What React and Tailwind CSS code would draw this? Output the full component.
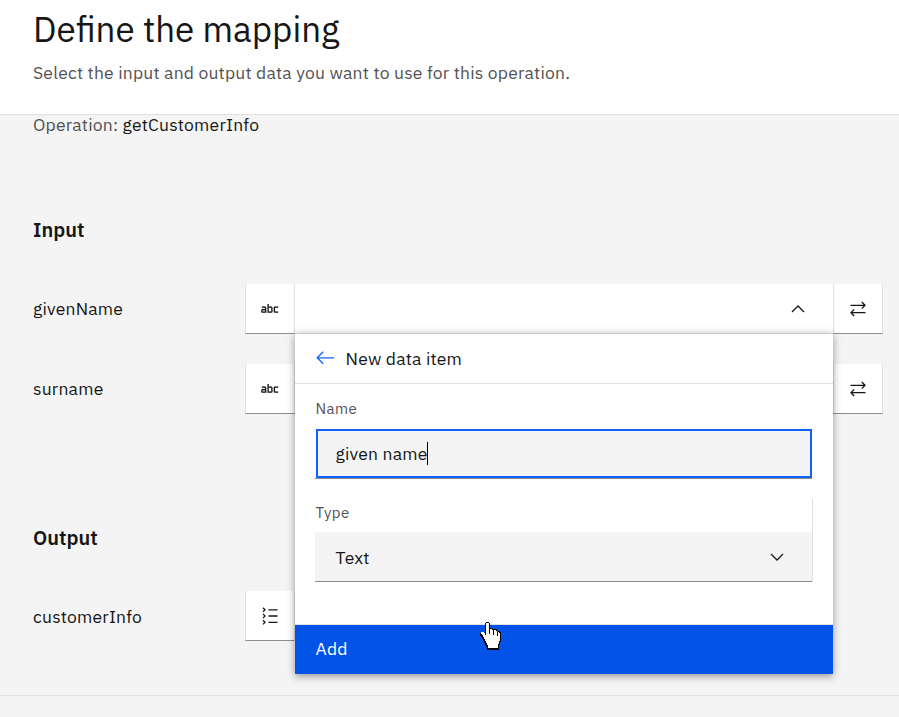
function TextTypeIcon() {
  return (
    <svg width="20" height="20" viewBox="0 0 32 32" fill="#161616" stroke="#161616" strokeWidth="0.2" aria-hidden="true">
      <path d="M29,22h-5a2,2,0,0,1-2-2V14a2,2,0,0,1,2-2h5v2H24v6h5Z" />
      <path d="M18,12H14V8H12V22h6a2,2,0,0,0,2-2V14A2,2,0,0,0,18,12Zm-4,8V14h4v6Z" />
      <path d="M8,12H3v2H8v2H4a2,2,0,0,0-2,2v2a2,2,0,0,0,2,2h6V14A2,2,0,0,0,8,12Zm0,8H4V18H8Z" />
    </svg>
  );
}

function ListIcon() {
  return (
    <svg width="20" height="20" viewBox="0 0 20 20" fill="none" stroke="#161616" strokeWidth="1.3" aria-hidden="true">
      <path d="M8.5 3.8h9M8.5 10h9M8.5 16.3h9" />
      <path d="M3 1.7l2 2.1l-2 2.1M3 7.9l2 2.1l-2 2.1M3 14.2l2 2.1l-2 2.1" />
    </svg>
  );
}

function SwapIcon() {
  return (
    <svg width="20" height="20" viewBox="0 0 20 20" fill="none" stroke="#161616" strokeWidth="1.3" aria-hidden="true">
      <path d="M2.5 6.3H17M13.8 3l3.2 3.3l-3.2 3.3M17.5 13.7H3M6.2 10.4l-3.2 3.3l3.2 3.3" />
    </svg>
  );
}

function Chevron({ up }) {
  return (
    <svg width="20" height="20" viewBox="0 0 20 20" fill="none" stroke="#161616" strokeWidth="1.3" aria-hidden="true">
      <path d={up ? "M4 13l6-6l6 6" : "M4 7l6 6l6-6"} />
    </svg>
  );
}

function BackIcon() {
  return (
    <svg className="-mt-px" width="20" height="20" viewBox="0 0 20 20" fill="none" stroke="#0f62fe" strokeWidth="1.3" aria-hidden="true">
      <path d="M19 9.8H2.5M8.2 3.8L2.2 9.8L8.2 15.8" />
    </svg>
  );
}

function HandCursor() {
  return (
    <svg className="absolute left-[185px] top-[288px]" width="22" height="28" viewBox="0 0 22 28" shapeRendering="crispEdges" aria-hidden="true">
      <path
        d="M6 0h3v1h1v5h3v1h4v2h3v1h1v10h-1v3h-1v5H7v-3H6v-2H5v-2H4v-2H3v-2H2v-2H1v-1H0v-3h1v-1h3v1h1V1h1z"
        fill="#000"
      />
      <path
        d="M6 1h3v11h1V7h2v1h1v5h1V8h2v1h1v5h1v-4h1v1h1v8h-1v3h-1v4H8v-3H7v-2H6v-2H5v-2H4v-2H3v-2H2v-1H1v-2h3v1h1v2h1z"
        fill="#fff"
      />
    </svg>
  );
}

function Row({ label, icon, swap, children }) {
  return (
    <div className="flex h-[50px] items-stretch">
      <div className="w-[212px] self-center">{label}</div>
      <div className="flex w-[50px] items-center justify-center border-x border-b border-x-[#e0e0e0] border-b-[#8d8d8d] bg-white">
        {icon}
      </div>
      <div className="relative flex w-[538px] items-center justify-end bg-white pr-[25px]">{children}</div>
      {swap && (
        <div className="flex w-[50px] items-center justify-center border-x border-b border-x-[#e0e0e0] border-b-[#8d8d8d] bg-white">
          <SwapIcon />
        </div>
      )}
    </div>
  );
}

function NewItemPanel() {
  return (
    <div className="absolute left-0 top-[49px] z-10 flex h-[341px] w-[538px] flex-col border-t border-[#c6c6c6] bg-white shadow-[0_2px_8px_rgba(0,0,0,0.4)]">
      <div className="flex h-[50px] shrink-0 items-center gap-[10.6px] border-b border-[#e0e0e0] pl-5">
        <BackIcon />
        <span>New data item</span>
      </div>
      <div className="flex grow flex-col pl-5 pr-5">
        <label className="ml-[0.6px] mt-[15px] text-[15px] leading-5 tracking-[0.4px] text-[#525252]">Name</label>
        <div className="mr-px mt-[10px] flex h-[50px] flex-col border-b border-[#8d8d8d]">
          <div className="ml-px flex grow items-center border-2 border-[#0f62fe] bg-[#f4f4f4] pl-[17.6px]">
            <span>given name</span>
            <span className="-ml-[0.6px] h-[23px] w-px bg-black" />
          </div>
        </div>
        <div className="mt-5 flex h-[83px] flex-col border-r border-[#e0e0e0]">
          <label className="ml-[0.6px] mt-1 text-[15px] leading-5 tracking-[0.4px] text-[#525252]">Type</label>
          <div className="mt-[9px] flex grow items-center justify-between border-b border-[#8d8d8d] bg-[#f4f4f4] pl-[20.6px] pr-[25px]">
            <span className="pt-0.5">Text</span>
            <Chevron />
          </div>
        </div>
      </div>
      <button className="flex h-[50px] shrink-0 items-center border-t border-[#e0e0e0] bg-[#0353e9] pb-0.5 pl-[20.6px] text-left tracking-[0.2px] text-white">
        Add
      </button>
      <HandCursor />
    </div>
  );
}

export default function App() {
  return (
    <div className="flex h-[717px] flex-col overflow-hidden bg-[#f4f4f4] font-['IBM_Plex_Sans',Roboto,sans-serif] text-[17.5px] leading-6 tracking-[0.2px] text-[#161616]">
      <header className="h-[115px] shrink-0 border-b border-[#e0e0e0] bg-white pl-[33px]">
        <h1 className="pt-[7px] text-[35px] leading-[45px] tracking-normal">Define the mapping</h1>
        <p className="mt-[9px] text-[#525252]">Select the input and output data you want to use for this operation.</p>
      </header>
      <main className="h-[581px] shrink-0 border-b border-[#e0e0e0] pl-[33px]">
        <p className="-mt-[2px]"><span className="text-[#525252]">Operation: </span>getCustomerInfo</p>
        <h2 className="mt-[81px] text-[20px] font-semibold leading-6 tracking-normal">Input</h2>
        <div className="mt-[42px] flex flex-col gap-[30px]">
          <Row label="givenName" icon={<TextTypeIcon />} swap>
            <Chevron up />
            <NewItemPanel />
          </Row>
          <Row label="surname" icon={<TextTypeIcon />} swap />
        </div>
        <h2 className="mt-[112px] text-[20px] font-semibold leading-6 tracking-normal">Output</h2>
        <div className="mt-[41px]">
          <Row label={<span className="block pt-0.5">customerInfo</span>} icon={<ListIcon />} />
        </div>
      </main>
    </div>
  );
}
